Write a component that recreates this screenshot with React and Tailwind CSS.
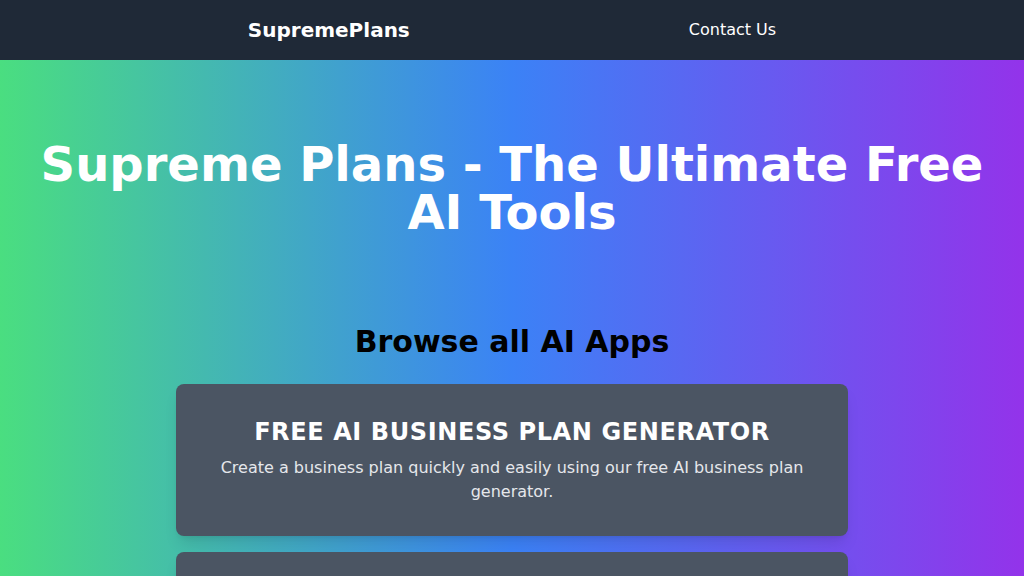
import React from "react";

const apps = [
  {
    title: "Free AI Business Plan Generator",
    text: "Create a business plan quickly and easily using our free AI business plan generator.",
  },
  {
    title: "Free AI Marketing Plan Generator",
    text: "Generate a complete marketing plan in minutes with our free AI marketing plan generator.",
  },
];

const App = () => {
  return (
    <div className="min-h-screen bg-[linear-gradient(to_right,#4ade80,#3b82f6,#9333ea)] font-['DejaVu_Sans',sans-serif]">
      <header className="bg-[#1f2937] text-white">
        <nav className="flex justify-center items-center gap-[279px] py-4">
          <a href="#" className="text-xl leading-7 font-bold">
            SupremePlans
          </a>
          <a href="#" className="text-base">
            Contact Us
          </a>
        </nav>
      </header>

      <section className="pt-20 pb-20 px-4 text-center">
        <h1 className="text-5xl leading-none font-bold text-white">
          Supreme Plans - The Ultimate Free AI Tools
        </h1>
      </section>

      <section className="pt-2 pb-10 px-4">
        <h2 className="text-3xl font-bold text-black text-center mb-6">
          Browse all AI Apps
        </h2>
        <div className="max-w-2xl mx-auto space-y-4">
          {apps.map((app) => (
            <div
              key={app.title}
              className="bg-[#4b5563] rounded-lg shadow-lg p-8 text-center"
            >
              <h3 className="text-2xl font-bold uppercase tracking-wide text-white mb-2">
                {app.title}
              </h3>
              <p className="text-base text-gray-200">{app.text}</p>
            </div>
          ))}
        </div>
      </section>
    </div>
  );
};

export default App;
